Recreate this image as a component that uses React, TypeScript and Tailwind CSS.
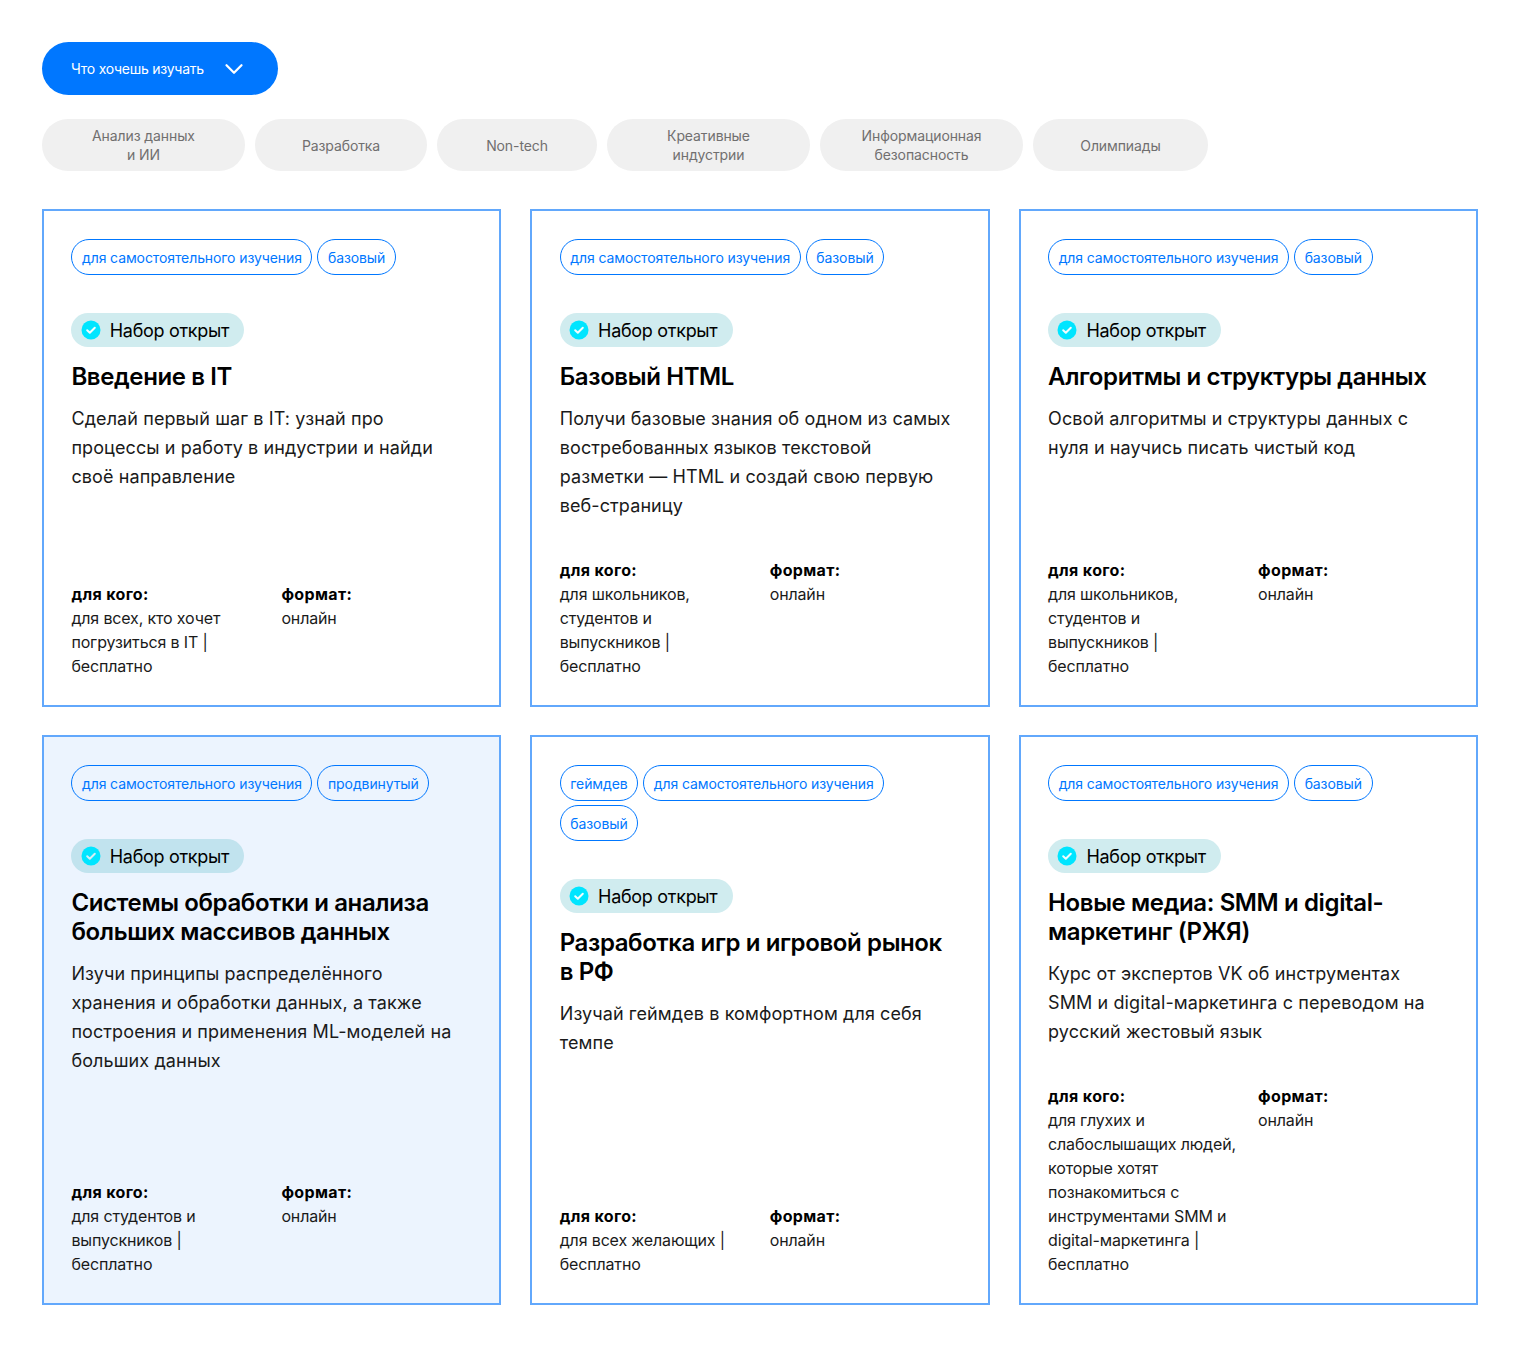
import React from "react";
import { ChevronDown } from "lucide-react";

type Course = {
  tags: string[];
  title: string[];
  desc: string[];
  who: string[];
  active?: boolean;
};

const filters = [
  { label: ["Анализ данных", "и ИИ"], w: "w-[203px]" },
  { label: ["Разработка"], w: "w-[172px]" },
  { label: ["Non-tech"], w: "w-[160px]" },
  { label: ["Креативные", "индустрии"], w: "w-[203px]" },
  { label: ["Информационная", "безопасность"], w: "w-[203px]" },
  { label: ["Олимпиады"], w: "w-[175px]" },
];

const courses: Course[] = [
  {
    tags: ["для самостоятельного изучения", "базовый"],
    title: ["Введение в IT"],
    desc: ["Сделай первый шаг в IT: узнай про", "процессы и работу в индустрии и найди", "своё направление"],
    who: ["для всех, кто хочет", "погрузиться в IT |", "бесплатно"],
  },
  {
    tags: ["для самостоятельного изучения", "базовый"],
    title: ["Базовый HTML"],
    desc: ["Получи базовые знания об одном из самых", "востребованных языков текстовой", "разметки — HTML и создай свою первую", "веб-страницу"],
    who: ["для школьников,", "студентов и", "выпускников |", "бесплатно"],
  },
  {
    tags: ["для самостоятельного изучения", "базовый"],
    title: ["Алгоритмы и структуры данных"],
    desc: ["Освой алгоритмы и структуры данных с", "нуля и научись писать чистый код"],
    who: ["для школьников,", "студентов и", "выпускников |", "бесплатно"],
  },
  {
    tags: ["для самостоятельного изучения", "продвинутый"],
    title: ["Системы обработки и анализа", "больших массивов данных"],
    desc: ["Изучи принципы распределённого", "хранения и обработки данных, а также", "построения и применения ML-моделей на", "больших данных"],
    who: ["для студентов и", "выпускников |", "бесплатно"],
    active: true,
  },
  {
    tags: ["геймдев", "для самостоятельного изучения", "базовый"],
    title: ["Разработка игр и игровой рынок", "в РФ"],
    desc: ["Изучай геймдев в комфортном для себя", "темпе"],
    who: ["для всех желающих |", "бесплатно"],
  },
  {
    tags: ["для самостоятельного изучения", "базовый"],
    title: ["Новые медиа: SMM и digital-", "маркетинг (РЖЯ)"],
    desc: ["Курс от экспертов VK об инструментах", "SMM и digital-маркетинга с переводом на", "русский жестовый язык"],
    who: ["для глухих и", "слабослышащих людей,", "которые хотят", "познакомиться с", "инструментами SMM и", "digital-маркетинга |", "бесплатно"],
  },
];

const Lines = ({ lines }: { lines: string[] }) => (
  <>
    {lines.map((l) => (
      <span key={l} className="block whitespace-nowrap">
        {l}
      </span>
    ))}
  </>
);

const CourseCard = ({ course }: { course: Course }) => (
  <div className={`flex flex-col border-2 border-[#62a8fc] pt-[28px] pb-[27px] pl-[27.4px] pr-[27px] ${course.active ? "bg-[#ecf4fe]" : "bg-white"}`}>
    <div className="flex flex-wrap gap-x-[5px] gap-y-[4px] mb-[38px]">
      {course.tags.map((t) => (
        <span key={t} className="h-[36px] flex items-center px-[9.6px] rounded-full border border-[#0077ff] text-[#0077ff] text-[14px] tracking-[-0.1px] whitespace-nowrap">
          {t}
        </span>
      ))}
    </div>
    <div className={`self-start h-[34px] w-[173px] flex items-center gap-[9px] pl-[9.4px] rounded-full text-[18px] tracking-[-0.3px] text-black ${course.active ? "bg-[#c1e3ee]" : "bg-[#d0ecef]"}`}>
      <svg width="20" height="20" viewBox="0 0 20 20" fill="none">
        <circle cx="10" cy="10" r="9.5" fill="#00e5ff" />
        <path d="M6.2 10.2l2.6 2.5 5-5" stroke={course.active ? "#d5eef5" : "#f2fcfd"} strokeWidth="2" strokeLinecap="round" strokeLinejoin="round" />
      </svg>
      <span>Набор открыт</span>
    </div>
    <h3 className="mt-[15px] text-[24px] leading-[29px] font-semibold tracking-[-0.38px] text-black">
      <Lines lines={course.title} />
    </h3>
    <p className="mt-[13px] text-[18px] leading-[29px] tracking-[0.1px] text-[#1a1a1a]">
      <Lines lines={course.desc} />
    </p>
    <div className="mt-auto pt-[24px] flex text-[16px] leading-[24px] tracking-[-0.15px] text-[#1a1a1a]">
      <div className="w-[210px]">
        <b className="block font-bold tracking-[0.35px] text-black">для кого:</b>
        <Lines lines={course.who} />
      </div>
      <div>
        <b className="block font-bold tracking-[0.35px] text-black">формат:</b>
        онлайн
      </div>
    </div>
  </div>
);

export default function App() {
  return (
    <div className="min-h-[1362px] bg-white pt-[42px] px-[42px] font-['Inter','Liberation_Sans',sans-serif]">
      <button className="h-[53px] w-[236px] flex items-center pl-[29px] rounded-full bg-[#0077ff] text-white text-[14px] tracking-[-0.25px]">
        <span>Что хочешь изучать</span>
        <ChevronDown className="ml-[15px] text-white" size={30} strokeWidth={1.8} />
      </button>
      <div className="flex gap-[10px] mt-[24px]">
        {filters.map((f) => (
          <div key={f.label[0]} className={`${f.w} h-[52px] flex flex-col items-center justify-center rounded-full bg-[#f0f0f0] text-[#706f6f] text-[14px] leading-[19px] tracking-[-0.1px]`}>
            <Lines lines={f.label} />
          </div>
        ))}
      </div>
      <div className="grid grid-cols-3 gap-x-[29px] gap-y-[28px] mt-[38px] grid-rows-[498px_570px]">
        {courses.map((c) => (
          <CourseCard key={c.title[0]} course={c} />
        ))}
      </div>
    </div>
  );
}
